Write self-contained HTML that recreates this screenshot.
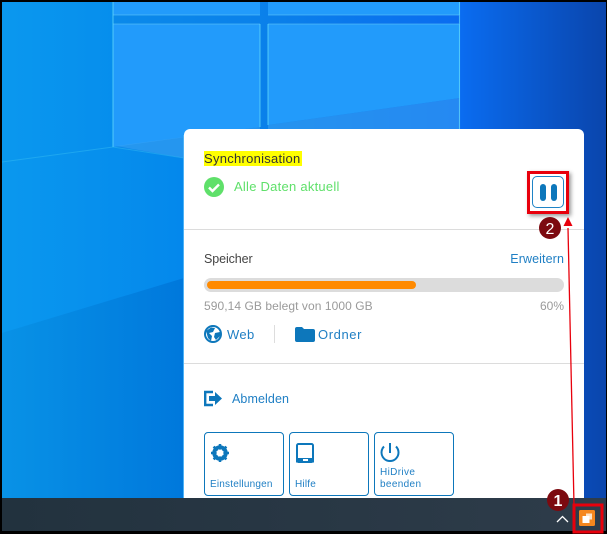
<!DOCTYPE html>
<html><head><meta charset="utf-8"><style>
html,body{margin:0;padding:0;width:607px;height:534px;overflow:hidden;background:#000}
body{position:relative;font-family:"Liberation Sans",sans-serif}
.t{position:absolute;white-space:nowrap;line-height:16px;font-size:12.5px;letter-spacing:.1px}
.b{color:#1f7fc4}
.box{position:absolute;box-sizing:border-box;border:1px solid #0d77bb;border-radius:4px;background:#fff}
.hr{position:absolute;left:184px;width:400px;height:1px;background:#dcdcdc}
svg{position:absolute;left:0;top:0}
</style></head><body>
<svg width="607" height="534" viewBox="0 0 607 534">
<defs>
<linearGradient id="bg" x1="0" y1="0" x2="1" y2="0"><stop offset="0" stop-color="#0a90ea"/><stop offset=".45" stop-color="#0a80ea"/><stop offset=".76" stop-color="#0a6cf0"/><stop offset="1" stop-color="#0a45ac"/></linearGradient>
<linearGradient id="up" gradientUnits="userSpaceOnUse" x1="2" y1="0" x2="184" y2="0"><stop offset="0" stop-color="#0a98ee"/><stop offset="1" stop-color="#0488ec"/></linearGradient>
<linearGradient id="lo" gradientUnits="userSpaceOnUse" x1="2" y1="0" x2="184" y2="0"><stop offset="0" stop-color="#0892e6"/><stop offset="1" stop-color="#0078dc"/></linearGradient>
<linearGradient id="tb" x1="0" y1="0" x2="1" y2="0"><stop offset="0" stop-color="#22323e"/><stop offset="1" stop-color="#2e3c4a"/></linearGradient>
</defs>
<rect x="2" y="2" width="604" height="496" fill="url(#bg)"/>
<path d="M2 2H113V147L2 162Z" fill="url(#up)"/>
<path d="M2 162L113 147L184 158V278L2 333Z" fill="url(#up)"/>
<path d="M2 333L184 278V498H2Z" fill="url(#lo)"/>
<path d="M113 2H260V15H113Z M268 2H460V15H268Z" fill="#229bfb"/>
<path d="M113 24H260V127L113 147Z M268 24H460V98L268 125Z" fill="#229bfb"/>
<path d="M116 146L260 127V150L184 158Z M268 125L460 98V130H268Z" fill="#3fa6f4" opacity=".5"/>
<path d="M113 15H260M113 24H260M268 15H459M268 24H459" stroke="#62c8f8" stroke-width="1" fill="none" opacity=".55"/>
<path d="M113 2V147M459.500 2V130M260 24V127M268 24V125" stroke="#6ae0fa" stroke-width="1.100" fill="none" opacity=".65"/>
<path d="M2 162L113 147L184 158" stroke="#3fc6f6" stroke-width="1" fill="none" opacity=".4"/>
<rect x="183" y="135" width="1" height="363" fill="#4db2f6"/>
<rect x="2" y="498" width="604" height="33" fill="url(#tb)"/>
</svg>

<div style="position:absolute;left:184px;top:129px;width:400px;height:369px;background:#fff;border-radius:6px 6px 0 0"></div>

<div class="t" style="left:204px;top:151px;height:15px;line-height:15px;background:#ffff00;color:#333;width:98px;font-size:13px;letter-spacing:.27px">Synchronisation</div>
<div class="t" style="left:234px;top:179px;color:#5fe06a;font-size:13px;letter-spacing:.25px">Alle Daten aktuell</div>
<div class="hr" style="top:229px"></div>
<div class="t" style="left:204px;top:251px;color:#444;letter-spacing:-.1px">Speicher</div>
<div class="t b" style="right:43px;top:251px">Erweitern</div>
<div style="position:absolute;left:204px;top:278px;width:360px;height:14px;background:#dcdcdc;border-radius:7px"></div>
<div style="position:absolute;left:207px;top:281px;width:209px;height:8px;background:#ff8a00;border-radius:4px"></div>
<div class="t" style="left:204px;top:298px;color:#9a9a9a;font-size:12px;letter-spacing:.07px">590,14 GB belegt von 1000 GB</div>
<div class="t" style="right:43px;top:298px;color:#9a9a9a;font-size:12px;letter-spacing:0">60%</div>
<div class="t b" style="left:227px;top:327px;font-size:13px;letter-spacing:.35px">Web</div>
<div style="position:absolute;left:274px;top:325px;width:1px;height:18px;background:#ddd"></div>
<div class="t b" style="left:318px;top:327px;font-size:13px;letter-spacing:.6px">Ordner</div>
<div class="hr" style="top:363px"></div>
<div class="t b" style="left:232px;top:391px">Abmelden</div>

<div class="box" style="left:204px;top:432px;width:80px;height:64px"></div>
<div class="box" style="left:289px;top:432px;width:80px;height:64px"></div>
<div class="box" style="left:374px;top:432px;width:80px;height:64px"></div>
<div class="t b" style="left:210px;top:478px;font-size:10px;letter-spacing:.2px;line-height:14px">Einstellungen</div>
<div class="t b" style="left:295px;top:478px;font-size:10px;letter-spacing:.2px;line-height:14px">Hilfe</div>
<div class="t b" style="left:380px;top:467px;font-size:10px;letter-spacing:.35px;line-height:12px">HiDrive<br>beenden</div>

<div style="position:absolute;left:527px;top:171px;width:36px;height:37px;border:3px solid #e8000c;box-shadow:2px 2px 4px rgba(0,0,0,.4)"></div>
<div class="box" style="left:532px;top:176px;width:32px;height:32px;border-radius:5px;border-color:#1f84c6"></div>
<div style="position:absolute;left:540px;top:184px;width:6px;height:17px;background:#0d77bb;border-radius:3px"></div>
<div style="position:absolute;left:551px;top:184px;width:6px;height:17px;background:#0d77bb;border-radius:3px"></div>

<svg width="607" height="534" viewBox="0 0 607 534">
<!-- check -->
<circle cx="214" cy="187" r="10" fill="#5fe06a"/>
<path d="M209 187.500L212.500 191L219 184.500" stroke="#fff" stroke-width="2.400" fill="none"/>
<!-- globe -->
<circle cx="213" cy="334" r="8" fill="#fff" stroke="#0d77bb" stroke-width="2"/>
<path d="M206 331L211 327.500L215 328L213 332L209 333L212 336L211 341L208 338Z M215 333L220 332L220 336L216 340L214 337Z" fill="#0d77bb"/>
<!-- folder -->
<path d="M295 329a2 2 0 0 1 2-2h5l2 2h9a2 2 0 0 1 2 2v9a2 2 0 0 1-2 2h-16a2 2 0 0 1-2-2Z" fill="#0d77bb"/>
<!-- logout -->
<path d="M213 392H205.200V405H213" stroke="#0d77bb" stroke-width="2.400" fill="none"/>
<path d="M209 396H215V392L222 398.500L215 405V401H209Z" fill="#0d77bb"/>
<!-- gear -->
<circle cx="220" cy="453" r="6" fill="none" stroke="#0d77bb" stroke-width="3.500"/>
<path d="M220 444V462M211 453H229M213.600 446.600L226.400 459.400M226.400 446.600L213.600 459.400" stroke="#0d77bb" stroke-width="2.500"/>
<circle cx="220" cy="453" r="3.500" fill="#fff"/>
<!-- tablet -->
<rect x="297" y="444" width="16" height="18" rx="1.500" fill="#fff" stroke="#0d77bb" stroke-width="2"/>
<rect x="296" y="458" width="18" height="4.500" fill="#0d77bb"/>
<rect x="303" y="459" width="5" height="2" fill="#fff"/>
<!-- power -->
<path d="M384 446.500A8.500 8.500 0 1 0 396 446.500" stroke="#0d77bb" stroke-width="2" fill="none"/>
<path d="M390 443V453" stroke="#0d77bb" stroke-width="2"/>
<!-- chevron -->
<path d="M557 522L562.500 516.500L568 522" stroke="#fff" stroke-width="1.300" fill="none"/>
<!-- tray icon -->
<rect x="579" y="510" width="16" height="16" rx="1.500" fill="#f5871f"/>
<rect x="586" y="513.500" width="6" height="6" fill="#fde3c8"/>
<rect x="582.500" y="516" width="7" height="7" fill="#fff"/>
<!-- red box -->
<rect x="574" y="505" width="28" height="27" fill="none" stroke="#e8000c" stroke-width="3"/>
<!-- arrow -->
<path d="M574 505L568 228" stroke="#e8000c" stroke-width="1.300"/>
<path d="M568 217L563.500 226H572.500Z" fill="#e8000c"/>
<!-- badges -->
<circle cx="550" cy="228" r="11" fill="#7c0a10"/>
<circle cx="558" cy="500" r="11" fill="#7c0a10"/>
<text x="550" y="234" font-family="Liberation Sans" font-size="16" fill="#fff" text-anchor="middle">2</text>
<text x="558" y="506" font-family="Liberation Sans" font-size="16" font-weight="bold" fill="#fff" text-anchor="middle">1</text>
</svg>
</body></html>
